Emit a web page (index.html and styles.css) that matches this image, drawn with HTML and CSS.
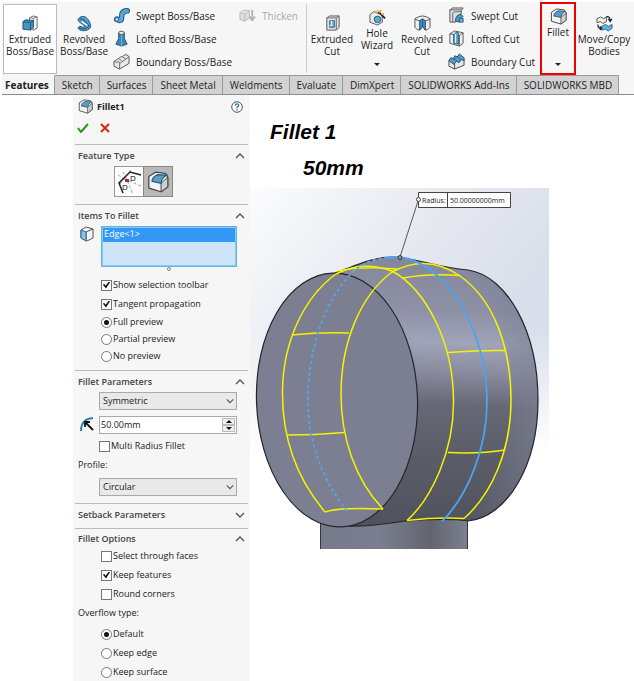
FILE: index.html
```html
<!DOCTYPE html>
<html lang="en">
<head>
<meta charset="utf-8">
<title>Fillet1</title>
<link rel="stylesheet" href="styles.css">
</head>
<body>
<svg class="defs" aria-hidden="true">
  <symbol id="i-fillet" viewBox="0 0 18 18">
    <path d="M1.500 4.500 7 1l8 1 2 3v8l-5.500 4-10-3z" fill="#f3f3f3" stroke="#444" stroke-linejoin="round"/>
    <path d="M11.500 10 17 5v8l-5.500 4z" fill="#cfcfcf" stroke="#444" stroke-width=".8"/>
    <path d="M4 8.500Q4.500 4.500 8.500 3l7.500.500q-4 2-4.500 6.500z" fill="#5b9dc6" stroke="#1f5377" stroke-width=".9"/>
  </symbol>
  <symbol id="i-up" viewBox="0 0 10 6"><path d="m1 5 4-4 4 4" fill="none" stroke="#555" stroke-width="1.400"/></symbol>
  <symbol id="i-down" viewBox="0 0 10 6"><path d="m1 1 4 4 4-4" fill="none" stroke="#555" stroke-width="1.400"/></symbol>
</svg>

<header class="ribbon">
  <button class="tool tool-active">
    <svg class="icon" viewBox="0 0 18 18"><path d="m8 3 4-2 4 1v12l-4 2-4-2z" fill="#f4f4f4" stroke="#666"/><path d="M12 3v12M16 2l-4 1.500L8 3" fill="none" stroke="#888"/><path d="m1 7 3-2 8 1v7l-3 3-8-1z" fill="#4b94c0" stroke="#1c5478"/><path d="m1 7 8 1 3-2M9 8v8" fill="none" stroke="#1c5478"/></svg>
    <span>Extruded<br>Boss/Base</span>
  </button>
  <button class="tool">
    <svg class="icon" viewBox="0 0 18 18"><path d="M2 5q3-5 8-3 4 3 5 7 2 5-3 7-7 2-10-2l2-2q4 2 6 0L3 7z" fill="#58a0cb" stroke="#1c5478"/><path d="M4 4q4 0 6 3l4 5M3 13q5 4 11-1" fill="none" stroke="#164b70"/><path d="m6 7 6 4" stroke="#fff" stroke-width="1.500"/></svg>
    <span>Revolved<br>Boss/Base</span>
  </button>
  <div class="stack">
    <button class="row-tool"><svg class="icon" viewBox="0 0 18 18"><path d="M4 13q5 3 5-2 0-7 6-7" fill="none" stroke="#1c5478" stroke-width="6" stroke-linecap="round"/><path d="M4 13q5 3 5-2 0-7 6-7" fill="none" stroke="#58a6d3" stroke-width="4" stroke-linecap="round"/><circle cx="4" cy="13" r="2" fill="#a7d3eb" stroke="#1c5478" stroke-width=".7"/></svg>Swept Boss/Base</button>
    <button class="row-tool"><svg class="icon" viewBox="0 0 18 18"><path d="M6 3v6l-3 6 6 2 6-2-3-6V3z" fill="#4089b7" stroke="#1c5478"/><path d="M9 5v12" stroke="#77b4d6"/><ellipse cx="9" cy="3" rx="3" ry="1.700" fill="#eee" stroke="#555"/></svg>Lofted Boss/Base</button>
    <button class="row-tool"><svg class="icon" viewBox="0 0 18 18"><path d="m1 9 3-2 2-1 2-2 2 0 2-2 3 0 2 2v7l-10 6-6-3z" fill="#e9e9e9" stroke="#555"/><path d="m1 9 3 1 2-1 1 2 10-7M7 11v6M6 6l3 2M10 4l3 2" fill="none" stroke="#666"/></svg>Boundary Boss/Base</button>
  </div>
  <button class="row-tool thicken" disabled><svg class="icon" viewBox="0 0 18 18"><path d="m1 6 5-3 5 1v8l-5 3-5-2zM1 6l5 1 5-3M6 7v8" fill="#ddd" stroke="#bbb"/><path d="M14 3v10m-3-3 3 4 3-4" fill="none" stroke="#b5b5b5" stroke-width="2"/></svg>Thicken</button>
  <i class="divider"></i>
  <button class="tool cut">
    <svg class="icon" viewBox="0 0 18 18"><path d="m3 3 3-2h10v12l-3 3H3z" fill="#e3e3e3" stroke="#555"/><path d="M13 16V3H3m10 0 3-2" fill="none" stroke="#666"/><path d="M6 6h5v7H6z" fill="#75b6da" stroke="#26658d"/><path d="M8 6v5H6" fill="none" stroke="#fff"/></svg>
    <span>Extruded<br>Cut</span>
  </button>
  <button class="tool wizard">
    <svg class="icon" viewBox="0 0 18 18"><path d="m1 6 4-3 9 3v8l-5 3-8-3z" fill="#ececec" stroke="#555"/><circle cx="9" cy="11" r="3.500" fill="#60a9d2" stroke="#245a7d"/><path d="m10 3 7 7" stroke="#222" stroke-width="2"/><path d="m5 2 3 2m1-3v2m4-2-2 3m5 1-3 1" stroke="#e5a43b" stroke-width="1.500"/></svg>
    <span>Hole<br>Wizard</span><i class="caret"></i>
  </button>
  <button class="tool cut">
    <svg class="icon" viewBox="0 0 18 18"><path d="M1 4q8-6 16 0v9q-2 3-5 3l-3-4-3 4q-3 0-5-3z" fill="#eee" stroke="#555"/><path d="m6 6 3-2 3 2v10l-3-4-3 4z" fill="#3d8cbb" stroke="#20587c"/><path d="M9 4v8M1 4q2 2 5 2m6 0q3 0 5-2" fill="none" stroke="#555"/></svg>
    <span>Revolved<br>Cut</span>
  </button>
  <div class="stack stack-cut">
    <button class="row-tool"><svg class="icon" viewBox="0 0 18 18"><path d="m2 3 3-2h11l-2 3v4q-6 0-6 8H2z" fill="#ddd" stroke="#555"/><path d="M2 3h12M5 16V7q0-2 3-2h6" fill="none" stroke="#666"/><path d="M8 15q0-7 6-7l2 2q-4 1-4 6z" fill="#4b9dcc" stroke="#20587c"/><path d="M12 12h4v4h-4z" fill="#70b7dd" stroke="#20587c"/></svg>Swept Cut</button>
    <button class="row-tool"><svg class="icon" viewBox="0 0 18 18"><path d="m2 4 5-3 9 2v11l-4 3-10-3z" fill="#eee" stroke="#555"/><path d="m2 4 5 1 5 1 4-3M12 6v11" fill="none" stroke="#555"/><path d="m6 5 3-3 2 1v12l-5-1z" fill="#62aad1" stroke="#20587c"/><path d="M8 4v10" stroke="#eef8ff"/></svg>Lofted Cut</button>
    <button class="row-tool"><svg class="icon" viewBox="0 0 18 18"><path d="m1 8 11-5 5 4v6l-10 4-6-3z" fill="#e7e7e7" stroke="#444"/><path d="m1 8 2-3 3 1 1-3 3 1 2-3 5 4v3l-3-1-2 3-3-1-3 3z" fill="#519dca" stroke="#204f70"/><path d="m7 11 0 6M6 6l3 2m1-4 3 3" stroke="#27516b"/></svg>Boundary Cut</button>
  </div>
  <button class="tool tool-marked">
    <svg class="icon"><use href="#i-fillet"/></svg>
    <span>Fillet</span><i class="caret"></i>
  </button>
  <button class="tool move">
    <svg class="icon" viewBox="0 0 18 18"><path d="m1 4 4-2 3 2 3-2v5L7 9 5 7 1 8z" fill="#eee" stroke="#555"/><path d="m6 12 4-2 3 2 4-2v4l-4 3-3-2-4 1z" fill="#62afe0" stroke="#286b96"/><path d="M11 2q4-1 4 4m-2-2 2 3 2-3M2 10q0 5 4 4m-2-2 2 2-2 2" fill="none" stroke="#222" stroke-width="1.300"/></svg>
    <span>Move/Copy<br>Bodies</span>
  </button>
</header>

<nav class="tabs">
  <a class="current" href="#features">Features</a><a href="#sketch">Sketch</a><a href="#surfaces">Surfaces</a><a href="#sheet">Sheet Metal</a><a href="#weld">Weldments</a><a href="#evaluate">Evaluate</a><a href="#dim">DimXpert</a><a href="#addins">SOLIDWORKS Add-Ins</a><a href="#mbd">SOLIDWORKS MBD</a>
</nav>

<main class="workspace">
  <form class="panel">
    <div class="panel-title">
      <svg class="icon"><use href="#i-fillet"/></svg><h1>Fillet1</h1>
      <button type="button" class="plain help" aria-label="Help"><svg width="12" height="12" viewBox="0 0 12 12"><circle cx="6" cy="6" r="5.300" fill="#fff" stroke="#555"/><path d="M4.200 4.500Q4.300 2.800 6 2.800t1.800 1.500Q7.700 5.400 6 6.100V7.400M6 8.300v1.200" fill="none" stroke="#2477a5" stroke-width="1.300"/></svg></button>
    </div>
    <div class="confirm">
      <button type="button" class="plain" aria-label="OK"><svg width="12" height="10" viewBox="0 0 12 10"><path d="m1 5 3 4 7-8" fill="none" stroke="#2f9418" stroke-width="2"/></svg></button>
      <button type="button" class="plain" aria-label="Cancel"><svg width="10" height="10" viewBox="0 0 10 10"><path d="m1 1 8 8M9 1 1 9" stroke="#d9290d" stroke-width="2"/></svg></button>
    </div>

    <section>
      <h2>Feature Type<svg class="chev"><use href="#i-up"/></svg></h2>
      <div class="types">
        <button type="button" aria-label="Variable size"><svg width="28" height="28" viewBox="0 0 28 28"><path d="M8 4 12 12 18 26M16 2 5 16M14 13l12 5M3 7l8 5" stroke="#73b3d2" stroke-dasharray="3 2" fill="none"/><path d="M8 25 4 15 15 4l11 3" fill="none" stroke="#222" stroke-width="1.500"/><path d="M10 11h4v3h-4z" fill="#d41d12"/><text x="7" y="22">D</text><text x="15" y="13">D</text></svg></button>
        <button type="button" class="on" aria-label="Constant size"><svg width="22" height="22"><use href="#i-fillet"/></svg></button>
      </div>
    </section>

    <section>
      <h2>Items To Fillet<svg class="chev"><use href="#i-up"/></svg></h2>
      <div class="field">
        <svg class="field-icon" viewBox="0 0 14 16"><path d="m1 4 5-3 7 2v9l-6 3-6-3z" fill="#f2f2f2" stroke="#555"/><path d="m6 6 7-3M6 6v9" fill="none" stroke="#555"/><path d="m1 4 5 2v9l-5-3z" fill="#8cc3de" stroke="#266b95"/></svg>
        <ul class="list" role="listbox" aria-label="Edges"><li role="option" aria-selected="true">Edge&lt;1&gt;</li></ul>
      </div>
      <i class="grip"></i>
      <div class="options">
        <label><input type="checkbox" checked>Show selection toolbar</label>
        <label><input type="checkbox" checked>Tangent propagation</label>
        <label class="tight"><input type="radio" name="preview" checked>Full preview</label>
        <label class="tight"><input type="radio" name="preview">Partial preview</label>
        <label class="tight"><input type="radio" name="preview">No preview</label>
      </div>
    </section>

    <section>
      <h2>Fillet Parameters<svg class="chev"><use href="#i-up"/></svg></h2>
      <div class="select"><select aria-label="Symmetry"><option>Symmetric</option></select><svg class="arrow"><use href="#i-down"/></svg></div>
      <div class="field radius">
        <svg class="field-icon" viewBox="0 0 14 16"><path d="M1 15Q1 3 13 2" fill="none" stroke="#3480ab" stroke-width="2"/><path d="m13 14-8-8m0 5V6h5" fill="none" stroke="#111" stroke-width="1.800"/></svg>
        <div class="spin"><input type="text" value="50.00mm" aria-label="Radius"><span class="steps"><button type="button" aria-label="Increase"><i class="tri up"></i></button><button type="button" aria-label="Decrease"><i class="tri"></i></button></span></div>
      </div>
      <div class="options multi"><label><input type="checkbox">Multi Radius Fillet</label></div>
      <label class="caption" for="profile">Profile:</label>
      <div class="select"><select id="profile"><option>Circular</option></select><svg class="arrow"><use href="#i-down"/></svg></div>
    </section>

    <section class="closed"><h2>Setback Parameters<svg class="chev"><use href="#i-down"/></svg></h2></section>

    <section class="last">
      <h2>Fillet Options<svg class="chev"><use href="#i-up"/></svg></h2>
      <div class="options">
        <label><input type="checkbox">Select through faces</label>
        <label><input type="checkbox" checked>Keep features</label>
        <label><input type="checkbox">Round corners</label>
      </div>
      <p class="caption">Overflow type:</p>
      <div class="options overflow">
        <label><input type="radio" name="overflow" checked>Default</label>
        <label><input type="radio" name="overflow">Keep edge</label>
        <label><input type="radio" name="overflow">Keep surface</label>
      </div>
    </section>
  </form>

  <div class="stage">
    <p class="note">Fillet 1</p>
    <p class="note note-size">50mm</p>
    <svg class="model" viewBox="250 188 299 361">
      <defs>
        <linearGradient id="sky" x1="0" y1="0" x2="1" y2="1"><stop offset="0" stop-color="#fcfcfd"/><stop offset=".3" stop-color="#e9ebf1"/><stop offset=".6" stop-color="#d9deea"/><stop offset="1" stop-color="#dce1ec"/></linearGradient>
        <linearGradient id="fade" x1="0" y1="0" x2="0" y2="1"><stop offset=".4" stop-color="#fff" stop-opacity="0"/><stop offset=".73" stop-color="#fff"/></linearGradient>
        <linearGradient id="side" gradientUnits="userSpaceOnUse" x1="450" y1="257" x2="438" y2="525"><stop offset="0" stop-color="#84879c"/><stop offset=".2" stop-color="#8e91a6"/><stop offset=".32" stop-color="#a0a4b8"/><stop offset=".42" stop-color="#8b8ea1"/><stop offset=".55" stop-color="#666875"/><stop offset=".75" stop-color="#5a5c68"/><stop offset="1" stop-color="#50525d"/></linearGradient>
        <linearGradient id="rim" x1="0" x2="1"><stop offset="0" stop-color="#777b8e" stop-opacity="0"/><stop offset="1" stop-color="#7d8194" stop-opacity=".65"/></linearGradient>
        <linearGradient id="post" x1="0" x2="1"><stop offset="0" stop-color="#777a8b"/><stop offset=".4" stop-color="#7b7e8e"/><stop offset=".75" stop-color="#62656f"/><stop offset="1" stop-color="#7d8091"/></linearGradient>
      </defs>
      <path d="M250 188h299v361H250z" fill="url(#sky)"/>
      <path d="M250 188h299v361H250z" fill="url(#fade)"/>
      <path d="M320 505h148v44H320z" fill="url(#post)"/>
      <path d="M320.500 515v34M467.500 515v34" stroke="#333641"/>
      <path d="M335 273C355 266 372 257 393 257C412 257 435 267 468 270C508 276 538 333 538 400C538 466 507 517 468 521C448 518 420 520 405 521C380 525 360 527 341 526z" fill="url(#side)"/>
      <path d="M460 276C494 297 511 345 511 400C511 452 490 494 464 519H468C507 517 538 466 538 400C538 333 508 276 468 270z" fill="url(#rim)"/>
      <path d="M335 273C355 266 372 257 393 257C412 257 435 267 468 270C508 276 538 333 538 400C538 466 507 517 468 521C448 518 420 520 405 521C380 525 360 527 341 526" fill="none" stroke="#24252b" stroke-width="1.200"/>
      <ellipse cx="337" cy="400" rx="80.500" ry="127" transform="rotate(-2 337 400)" fill="#7c7f91" stroke="#24252b" stroke-width="1.200"/>
      <g fill="none" stroke="#f4f400" stroke-width="1.500">
        <path d="M325 512C297 479 282 438 282.500 391C283 342 304 297 336 274Q362 260 392 271C427 290 453.500 344 453.500 401C454 450 432 498 407 520.500"/>
        <path d="M383 509C355 480 341 437 341 394C341 343 360 296 392 272Q427 253 460 276C493 299 511 346 511 400C511 450 492 494 464 518.500"/>
        <path d="M292 335Q320 332 349 333M287 435Q315 435 344 432.500M325 512Q338 507 383 509M448 352.500Q480 350 505 350.500M448 452.500Q480 454 505 450M407 520.500Q438 517 464 518.500M403 278Q430 273 460 275.500M338 271Q360 266 397 269"/>
      </g>
      <path d="M347 511C321 478 307 439 308 396C309 345 326 297 355 270Q372 257 391 257.500" fill="none" stroke="#58a6f3" stroke-width="1.800" stroke-dasharray="3 3"/>
      <path d="M385 258Q394 256.500 405 258C455 270 487 340 487 401C487 450 467 496 442 521.500" fill="none" stroke="#4da2f2" stroke-width="1.800"/>
      <path d="M400 257 418.500 199.500" stroke="#55575c"/>
      <path d="M418.500 192.500h92v15h-92zM447.500 192.500v15" fill="#fff" stroke="#444"/>
      <circle cx="418.500" cy="199.500" r="2" fill="#fff" stroke="#444"/><circle cx="400" cy="257.500" r="2" fill="#999" stroke="#333"/>
      <text class="callout" x="422" y="203">Radius:</text><text class="callout" x="450" y="203">50.00000000mm</text>
    </svg>
  </div>
</main>
</body>
</html>
```
FILE: styles.css
```css
* { box-sizing: border-box; }
body { margin: 0; background: #fff; color: #222; font: 10px/12px "Open Sans", "Noto Sans", sans-serif; overflow: hidden; }
button, select, input { font: inherit; color: inherit; margin: 0; }
h1, h2, p, ul { margin: 0; padding: 0; font-size: inherit; }
ul { list-style: none; }
.defs { position: absolute; width: 0; height: 0; }
.icon { width: 17px; height: 17px; flex: none; }

.ribbon { display: flex; margin: 2px 0 0 2px; height: 73px; padding: 2px 0 1px 1px; background: #f6f6f6; }
.tool { display: flex; flex-direction: column; align-items: center; flex: none; width: 54px; padding: 10px 0 0; border: 1px solid transparent; background: none; white-space: nowrap; }
.tool span { margin-top: 1px; }
.tool-active { background: #fff; border-color: #bbb; }
.stack { display: flex; flex-direction: column; width: 128px; flex: none; }
.row-tool { display: flex; align-items: center; gap: 6px; height: 23px; padding: 0; border: 0; background: none; white-space: nowrap; text-align: left; }
.stack .row-tool { padding-left: 2px; }
.thicken { color: #aaa; width: 67px; flex: none; }
.divider { width: 1px; margin: 0 1px 1px 0; background: #ccc; flex: none; }
.cut { width: 48px; }
.tool.wizard { width: 42px; padding-top: 4px; }
.stack-cut { width: 94px; }
.tool.tool-marked { width: 36px; padding-top: 4px; margin: -2px 0 -1px; border: 2px solid #f00000; }
.caret { border: 3px solid transparent; border-top-color: #222; border-bottom: 0; margin: auto 0 7px; }
.tool.move { width: 56px; padding-top: 10px; }

.tabs { display: flex; height: 20px; margin-left: 2px; line-height: 19px; border-bottom: 1px solid #888f93; background: #f6f6f6; }
.tabs a { padding: 0 6px 0 7px; color: #222; text-decoration: none; white-space: nowrap; background: #d2d2d2; border: 1px solid #999; border-width: 1px 1px 0 0; }
.tabs .current { padding: 0 5px 0 3px; background: #f6f6f6; font-weight: bold; border-top-color: #f6f6f6; }

.workspace { display: flex; align-items: flex-start; }
.panel { width: 177px; margin-left: 73px; padding: 0 2px; flex: none; background: #f6f6f6; font-size: 9px; }
.panel-title { display: flex; align-items: center; height: 23px; padding: 0 5px 0 3px; gap: 4px; }
.panel-title .icon { width: 15px; height: 15px; }
.plain { display: flex; padding: 0; border: 0; background: none; }
.help { margin-left: auto; }
.confirm { display: flex; align-items: center; gap: 11px; height: 20px; padding-left: 2px; margin-bottom: 6px; }
section { border-top: 1px solid #bbb; padding-bottom: 7px; }
h2 { display: flex; align-items: center; justify-content: space-between; height: 21px; padding: 0 3px; font-weight: 600; color: #444; }
.chev { width: 10px; height: 6px; }
.types { display: flex; margin-left: 39px; height: 31px; }
.types button { display: flex; align-items: center; justify-content: center; width: 30px; padding: 0; border: 1px solid #999; background: #fdfdfd; }
.types .on { background: #b9b9b9; border-color: #888; margin-left: -1px; }
.types text { font: 8px "Open Sans", sans-serif; }
.field { display: flex; }
.field-icon { width: 14px; height: 16px; margin-left: 5px; flex: none; }
.list { flex: 1; height: 41px; margin: 0 11px 0 7px; padding: 1px; border: 1px solid #5fb2e4; outline: 1px solid #8cc9ee; outline-offset: -2px; background: #cde4f8; }
.list li { height: 14px; padding-left: 1px; background: #3398f5; color: #fff; }
.grip { display: block; width: 4px; height: 4px; margin: 0 auto 6px 92px; border: 1px solid #888; border-radius: 50%; }
.options { display: grid; gap: 3px; padding-left: 26px; }
.options label { display: flex; align-items: center; gap: 1px; height: 16px; }
.options .tight { height: 14px; }
.options input { position: relative; appearance: none; width: 11px; height: 11px; border: 1px solid #777; background: #fff; flex: none; }
.options [type=radio] { border-radius: 50%; }
.options :checked::before { content: ""; position: absolute; inset: 1px; background: #111; clip-path: polygon(0 45%, 16% 32%, 38% 62%, 83% 0, 100% 12%, 42% 100%); }
.options [type=radio]:checked::before { inset: 2px; border-radius: 50%; clip-path: none; }
.select { position: relative; margin: 0 11px 0 24px; }
select { display: block; appearance: none; width: 100%; height: 18px; padding: 0 3px; border: 1px solid #aaa; border-radius: 0; background: #e9e9e9; }
.arrow { position: absolute; right: 3px; top: 6px; width: 8px; height: 6px; pointer-events: none; }
.radius { margin: 6px 0 4px; }
.spin { display: flex; flex: 1; min-width: 0; height: 18px; margin: 0 11px 0 5px; padding: 1px; border: 1px solid #aaa; background: #fff; }
.spin input { flex: 1; width: 0; min-width: 0; padding: 0; border: 0; background: none; }
.steps { display: flex; flex-direction: column; width: 13px; flex: none; }
.steps button { display: flex; flex: 1; align-items: center; justify-content: center; padding: 0; border: 1px solid #bbb; background: #eee; }
.tri { border: 3px solid transparent; border-top-color: #111; border-bottom: 0; }
.tri.up { border: 3px solid transparent; border-bottom-color: #111; border-top: 0; }
.multi { padding-left: 24px; }
.caption { display: block; padding: 5px 3px 7px; }
.closed { padding-bottom: 3px; }
.last { padding-bottom: 1px; }
.last h2 { height: 19px; }

.stage { flex: 1; min-width: 0; }
.note { margin: 25px 0 0 20px; font: italic bold 21px/24px "Liberation Sans", sans-serif; color: #000; }
.note-size { margin: 12px 0 8px 53px; }
.model { display: block; width: 78%; max-width: 299px; }
.callout { font: 7px "Open Sans", sans-serif; fill: #222; }
```
